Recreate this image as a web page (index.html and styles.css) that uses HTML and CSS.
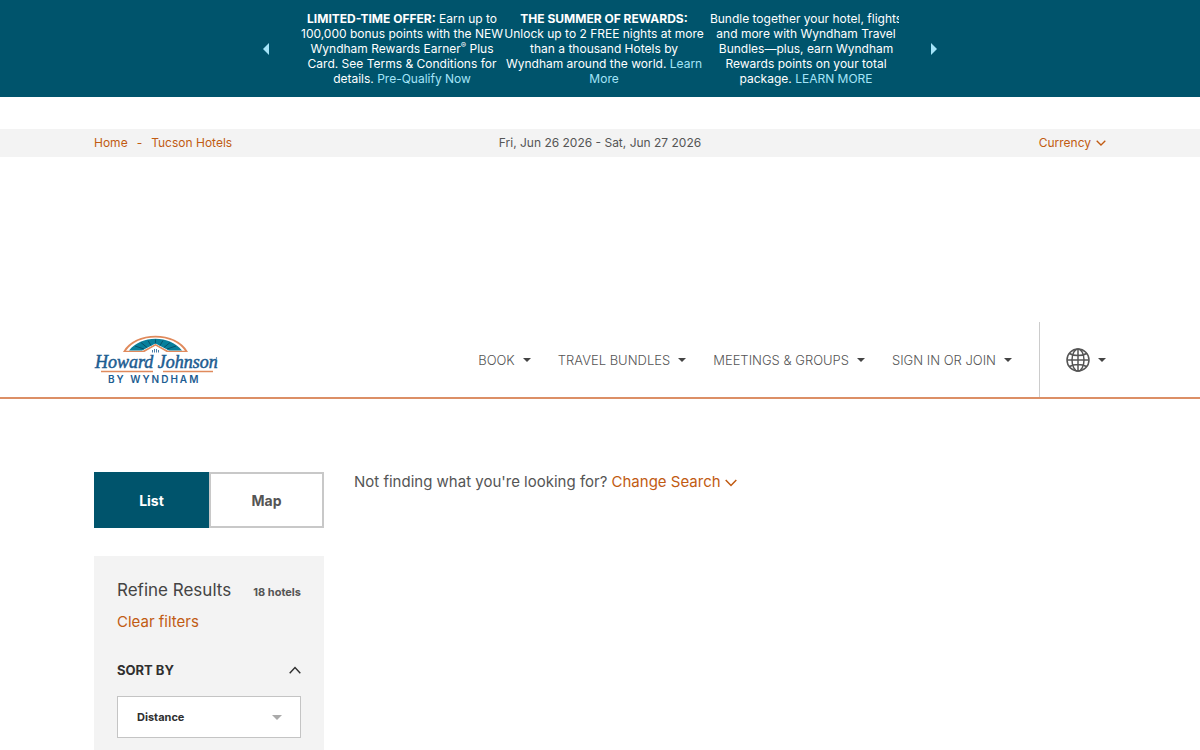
FILE: index.html
```
<!DOCTYPE html>
<html lang="en">
<head>
    <meta charset="UTF-8">
    <meta name="viewport" content="width=device-width, initial-scale=1.0">
    <title>Tucson Hotels | Howard Johnson by Wyndham</title>
    <link rel="stylesheet" href="styles.css">
</head>
<body>
    <section class="promo-bar" aria-label="Offers">
        <button class="promo-arrow" type="button" aria-label="Previous offer">
            <svg width="6" height="12" viewBox="0 0 6 12"><path d="M6 0v12L0 6z" fill="currentColor"/></svg>
        </button>
        <div class="promo-track">
            <p class="promo-slide"><strong>LIMITED-TIME OFFER:</strong> Earn up to<br>100,000 bonus points with the NEW<br>Wyndham Rewards Earner<sup>®</sup> Plus<br>Card. See Terms &amp; Conditions for<br>details. <a href="#">Pre-Qualify Now</a></p>
            <p class="promo-slide"><strong>THE SUMMER OF REWARDS:</strong><br>Unlock up to 2 FREE nights at more<br>than a thousand Hotels by<br>Wyndham around the world. <a href="#">Learn<br>More</a></p>
            <p class="promo-slide">Bundle together your hotel, flights<br>and more with Wyndham Travel<br>Bundles—plus, earn Wyndham<br>Rewards points on your total<br>package. <a href="#">LEARN MORE</a></p>
        </div>
        <button class="promo-arrow" type="button" aria-label="Next offer">
            <svg width="6" height="12" viewBox="0 0 6 12"><path d="M0 0v12l6-6z" fill="currentColor"/></svg>
        </button>
    </section>

    <div class="sub-bar">
        <div class="container sub-bar-inner">
            <nav class="breadcrumb" aria-label="Breadcrumb">
                <a href="#">Home</a>
                <span>-</span>
                <a href="#">Tucson Hotels</a>
            </nav>
            <div class="stay-dates">Fri, Jun 26 2026 - Sat, Jun 27 2026</div>
            <button class="currency" type="button">Currency
                <svg width="10" height="6" viewBox="0 0 10 6"><path d="M.7.7 5 5 9.300.7" fill="none" stroke="currentColor" stroke-width="1.300"/></svg>
            </button>
        </div>
    </div>

    <header class="site-header">
        <div class="container header-inner">
            <a class="logo" href="#" aria-label="Howard Johnson by Wyndham">
                <svg width="124" height="50" viewBox="0 0 124 50">
                    <path d="M29 17C35 6 48 .8 61.500.8S88 6 94 17H73L61.500 11 50 17z" fill="#e08a5c"/>
                    <path d="M32 15.800C38 7 49 2.500 61.500 2.500S85 7 91 15.800H74L61.500 9 49 15.800z" fill="#fff"/>
                    <path d="M35 15.500C41 8 51 3.800 61.500 3.800S82 8 88 15.500H75L61.500 8.500 48 15.500z" fill="#087f9b"/>
                    <path d="M41 11l9 3M47 7.500l6 5M54 5.500l3 5M61.500 4.500v4M69 5.500l-3 5M76 7.500l-6 5M82 11l-9 3" stroke="#07516b"/>
                    <path d="M50 16.500 61.500 10 73 16.500" fill="#fff" stroke="#e08a5c" stroke-width="1.200"/>
                    <path d="M58.500 17.500V15M60.500 17.500V14M62.500 17.500V14M64.500 17.500V15" stroke="#1d5d91" stroke-width=".8"/>
                    <text class="logo-name" x="1" y="33">Howard Johnson</text>
                    <circle cx="122.500" cy="23" r=".7" fill="#1d5d91"/>
                    <path d="M7 36.500h52M69 36.500h50" stroke="#e08a5c" stroke-width="1.400"/>
                    <text class="logo-sub" x="14" y="48">BY WYNDHAM</text>
                </svg>
            </a>
            <nav class="main-nav">
                <button type="button">BOOK <span class="caret"></span></button>
                <button type="button">TRAVEL BUNDLES <span class="caret"></span></button>
                <button type="button">MEETINGS &amp; GROUPS <span class="caret"></span></button>
                <button type="button">SIGN IN OR JOIN <span class="caret"></span></button>
            </nav>
            <button class="language" type="button" aria-label="Select language">
                <svg width="24" height="24" viewBox="0 0 24 24" fill="none" stroke="currentColor" stroke-width="1.500">
                    <circle cx="12" cy="12" r="11"/>
                    <ellipse cx="12" cy="12" rx="6" ry="11"/>
                    <path d="M12 1v22M1 12h22M3.500 5.500C8 8.300 16 8.300 20.500 5.500M3.500 18.500C8 15.700 16 15.700 20.500 18.500"/>
                </svg>
                <span class="caret"></span>
            </button>
        </div>
    </header>

    <main class="container results">
        <aside class="sidebar">
            <div class="view-toggle">
                <button class="active" type="button">List</button>
                <button type="button">Map</button>
            </div>
            <div class="refine">
                <div class="refine-head">
                    <h2>Refine Results</h2>
                    <span class="count">18 hotels</span>
                </div>
                <a class="clear" href="#">Clear filters</a>
                <div class="sort-head">
                    <label for="sort">SORT BY</label>
                    <button type="button" aria-label="Collapse sort options">
                        <svg width="12" height="8" viewBox="0 0 12 8"><path d="M.7 7.300 6 1.500l5.300 5.800" fill="none" stroke="currentColor" stroke-width="1.400"/></svg>
                    </button>
                </div>
                <div class="select-wrap">
                    <select id="sort">
                        <option>Distance</option>
                        <option>Price</option>
                    </select>
                </div>
            </div>
        </aside>
        <section class="search-hint">
            Not finding what you're looking for?
            <a href="#">Change Search <svg width="12" height="8" viewBox="0 0 12 8"><path d="M.7.9 6 6.500 11.300.9" fill="none" stroke="currentColor" stroke-width="1.500"/></svg></a>
        </section>
    </main>
</body>
</html>
```
FILE: styles.css
```
* {
    box-sizing: border-box;
}
body {
    margin: 0;
    background: #fff;
    color: #555;
    font-family: Inter, "Liberation Sans", sans-serif;
    font-size: 15px;
}
a {
    color: #c15b12;
    text-decoration: none;
}
button {
    padding: 0;
    border: none;
    background: none;
    color: inherit;
    font: inherit;
    cursor: pointer;
}
svg {
    flex-shrink: 0;
}
.container {
    width: 100%;
    max-width: 1012px;
    margin: 0 auto;
}

/* Promo bar */
.promo-bar {
    display: flex;
    justify-content: center;
    align-items: center;
    gap: 32px;
    padding: 11px 0;
    background: #00546c;
    color: #fff;
}
.promo-track {
    display: flex;
    width: 598px;
    overflow: hidden;
}
.promo-slide {
    flex: 0 0 202px;
    margin: 0;
    font-size: 12px;
    line-height: 15px;
    text-align: center;
    white-space: nowrap;
}
.promo-slide sup {
    font-size: 8px;
    line-height: 0;
}
.promo-slide a {
    color: #a4e4f8;
}
.promo-arrow {
    display: flex;
    color: #a4e4f8;
}

/* Breadcrumb and dates */
.sub-bar {
    margin-top: 32px;
    background: #f3f3f3;
    font-size: 12px;
    line-height: 28px;
}
.sub-bar-inner {
    display: grid;
    grid-template-columns: 1fr auto 1fr;
}
.breadcrumb {
    display: flex;
    gap: 9px;
    color: #c15b12;
}
.currency {
    display: flex;
    align-items: center;
    justify-self: end;
    gap: 5px;
    color: #c15b12;
}

/* Header */
.site-header {
    margin-top: 165px;
    border-bottom: 2px solid #dc8f66;
}
.header-inner {
    display: flex;
    height: 75px;
}
.logo {
    display: flex;
    align-items: center;
    margin-right: auto;
}
.logo-name {
    fill: #1d5d91;
    stroke: #1d5d91;
    stroke-width: 0.5px;
    font: italic 18px "Liberation Serif", serif;
}
.logo-sub {
    fill: #1d5d91;
    font: 600 10px Inter, sans-serif;
    letter-spacing: 2px;
}
.main-nav {
    display: flex;
    gap: 27px;
    padding-right: 27px;
    font-size: 13px;
    font-weight: 300;
}
.main-nav button,
.language {
    display: flex;
    align-items: center;
    gap: 8px;
}
.caret {
    border: 4px solid transparent;
    border-top-color: #444;
    border-bottom: 0;
}
.language {
    padding-left: 26px;
    border-left: 1px solid #ccc;
}

/* Results */
.results {
    display: flex;
    gap: 30px;
    margin-top: 73px;
}
.sidebar {
    flex: 0 0 230px;
}
.view-toggle {
    display: flex;
    height: 56px;
    margin-bottom: 28px;
}
.view-toggle button {
    flex: 1;
    border: 2px solid #c8c8c8;
    font-size: 14px;
    font-weight: 700;
}
.view-toggle .active {
    border-color: #00546c;
    background: #00546c;
    color: #fff;
}
.refine {
    padding: 22px 23px 32px;
    background: #f3f3f3;
}
.refine-head,
.sort-head {
    display: flex;
    justify-content: space-between;
    align-items: baseline;
}
.refine-head h2 {
    margin: 0;
    color: #444;
    font-size: 17px;
    font-weight: 400;
    line-height: 24px;
}
.count {
    font-size: 11px;
    font-weight: 700;
}
.clear {
    display: block;
    margin-top: 10px;
    line-height: 20px;
}
.sort-head {
    align-items: center;
    margin: 28px 0 16px;
    color: #2f2f2f;
    font-size: 13px;
    font-weight: 700;
    line-height: 20px;
}
.sort-head button {
    display: flex;
}
.select-wrap {
    position: relative;
}
.select-wrap::after {
    content: "";
    position: absolute;
    top: 19px;
    right: 19px;
    border: 5px solid transparent;
    border-top-color: #aaa;
    border-bottom: 0;
    pointer-events: none;
}
.select-wrap select {
    width: 100%;
    height: 42px;
    padding: 0 19px;
    border: 1px solid #c4c4c4;
    border-radius: 0;
    appearance: none;
    background: #fff;
    color: #2f2f2f;
    font: 700 11px Inter, sans-serif;
}
.search-hint {
    line-height: 20px;
}
```
